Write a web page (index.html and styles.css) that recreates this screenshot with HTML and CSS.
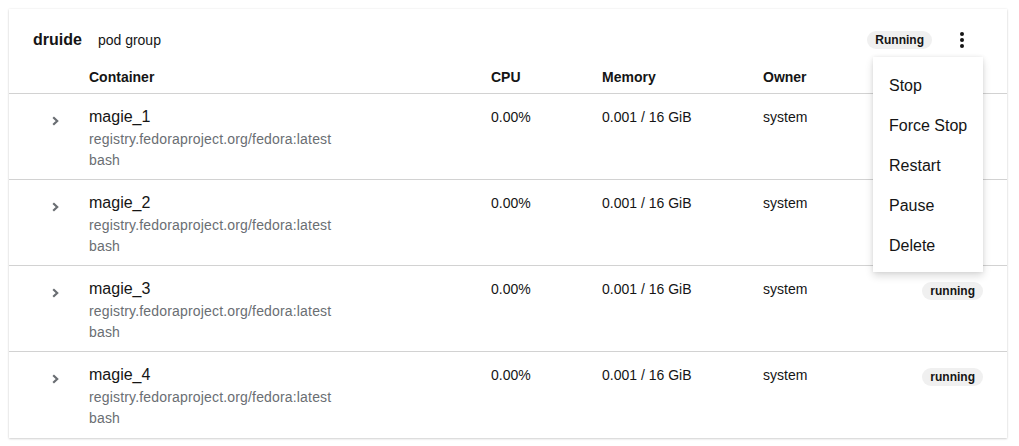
FILE: index.html
```html
<!DOCTYPE html>
<html>
<head>
<meta charset="utf-8">
<link rel="stylesheet" href="styles.css">
</head>
<body>
<div class="card">
  <div class="card-header">
    <span class="title">druide</span>
    <span class="subtitle">pod group</span>
    <span class="spacer"></span>
    <span class="badge">Running</span>
    <div class="kebab-wrap">
      <button class="kebab" aria-label="Actions">
        <svg width="4" height="16" viewBox="0 0 4 16"><circle cx="2" cy="2" r="2" fill="#151515"/><circle cx="2" cy="8" r="2" fill="#151515"/><circle cx="2" cy="14" r="2" fill="#151515"/></svg>
      </button>
      <ul class="menu">
        <li>Stop</li>
        <li>Force Stop</li>
        <li>Restart</li>
        <li>Pause</li>
        <li>Delete</li>
      </ul>
    </div>
  </div>
  <div class="table">
    <div class="row head">
      <div class="c-toggle"></div>
      <div class="c-name">Container</div>
      <div class="c-cpu">CPU</div>
      <div class="c-mem">Memory</div>
      <div class="c-owner">Owner</div>
      <div class="c-state"></div>
    </div>
    <div class="row">
      <div class="c-toggle"><svg class="chev" width="7" height="10" viewBox="0 0 7 10"><path d="M1.2 1.2 L5.2 5 L1.2 8.8" fill="none" stroke="#6a6e73" stroke-width="2.2"/></svg></div>
      <div class="c-name"><div class="name">magie_1</div><div class="sub">registry.fedoraproject.org/fedora:latest</div><div class="sub">bash</div></div>
      <div class="c-cpu">0.00%</div>
      <div class="c-mem">0.001 / 16 GiB</div>
      <div class="c-owner">system</div>
      <div class="c-state"><span class="badge small">running</span></div>
    </div>
    <div class="row">
      <div class="c-toggle"><svg class="chev" width="7" height="10" viewBox="0 0 7 10"><path d="M1.2 1.2 L5.2 5 L1.2 8.8" fill="none" stroke="#6a6e73" stroke-width="2.2"/></svg></div>
      <div class="c-name"><div class="name">magie_2</div><div class="sub">registry.fedoraproject.org/fedora:latest</div><div class="sub">bash</div></div>
      <div class="c-cpu">0.00%</div>
      <div class="c-mem">0.001 / 16 GiB</div>
      <div class="c-owner">system</div>
      <div class="c-state"><span class="badge small">running</span></div>
    </div>
    <div class="row">
      <div class="c-toggle"><svg class="chev" width="7" height="10" viewBox="0 0 7 10"><path d="M1.2 1.2 L5.2 5 L1.2 8.8" fill="none" stroke="#6a6e73" stroke-width="2.2"/></svg></div>
      <div class="c-name"><div class="name">magie_3</div><div class="sub">registry.fedoraproject.org/fedora:latest</div><div class="sub">bash</div></div>
      <div class="c-cpu">0.00%</div>
      <div class="c-mem">0.001 / 16 GiB</div>
      <div class="c-owner">system</div>
      <div class="c-state"><span class="badge small">running</span></div>
    </div>
    <div class="row last">
      <div class="c-toggle"><svg class="chev" width="7" height="10" viewBox="0 0 7 10"><path d="M1.2 1.2 L5.2 5 L1.2 8.8" fill="none" stroke="#6a6e73" stroke-width="2.2"/></svg></div>
      <div class="c-name"><div class="name">magie_4</div><div class="sub">registry.fedoraproject.org/fedora:latest</div><div class="sub">bash</div></div>
      <div class="c-cpu">0.00%</div>
      <div class="c-mem">0.001 / 16 GiB</div>
      <div class="c-owner">system</div>
      <div class="c-state"><span class="badge small">running</span></div>
    </div>
  </div>
</div>
</body>
</html>
```
FILE: styles.css
```css
* { box-sizing: border-box; }
html, body { margin: 0; background: #fff; }
body {
  padding: 9px 12px 10px 9px;
  font-family: "Liberation Sans", Arial, sans-serif;
  color: #151515;
  font-size: 14px;
}
.card {
  background: #fff;
  box-shadow: 0 1px 2px rgba(3,3,3,0.16), 0 0 2px rgba(3,3,3,0.08);
}
.card-header {
  display: flex;
  align-items: center;
  height: 51px;
  padding: 10px 24px 0 24px;
}
.title { font-size: 16px; font-weight: 700; }
.subtitle { margin-left: 16px; font-size: 14px; }
.spacer { flex: 1; }
.badge {
  display: inline-block;
  background: #f0f0f0;
  border-radius: 30px;
  font-size: 12px;
  font-weight: 700;
  line-height: 18px;
  padding: 0 8px;
  color: #151515;
}
.kebab-wrap { position: relative; margin-left: 24px; }
.kebab {
  display: flex;
  align-items: center;
  justify-content: center;
  border: 0;
  background: transparent;
  padding: 0;
  width: 12px;
  height: 20px;
  margin-right: 15px;
}
.menu {
  position: absolute;
  top: 27px;
  right: 0;
  width: 110px;
  margin: 0;
  padding: 9px 0 6px;
  list-style: none;
  background: #fff;
  box-shadow: 0 4px 8px rgba(3,3,3,0.14), 0 0 4px rgba(3,3,3,0.08);
  z-index: 10;
}
.menu li {
  font-size: 16px;
  line-height: 24px;
  padding: 8px 16px;
  white-space: nowrap;
}
.row {
  display: grid;
  grid-template-columns: 80px 402px 111px 161px 1fr auto;
  border-bottom: 1px solid #d2d2d2;
  padding: 11px 24px 8px 0;
  line-height: 24px;
}
.row.last { border-bottom: 0; padding-bottom: 9px; }
.row.head {
  padding: 5px 24px 4px 0;
  font-weight: 700;
  font-size: 14px;
}
.c-toggle { display: flex; justify-content: center; padding-top: 11px; padding-left: 13px; }
.chev { display: block; }
.row.head .c-toggle { padding: 0; }
.name { font-size: 16px; line-height: 24px; }
.sub { font-size: 14px; line-height: 21px; color: #6a6e73; letter-spacing: 0.17px; }
.c-state { padding-top: 1px; }
.badge.small { font-size: 12px; }
```
